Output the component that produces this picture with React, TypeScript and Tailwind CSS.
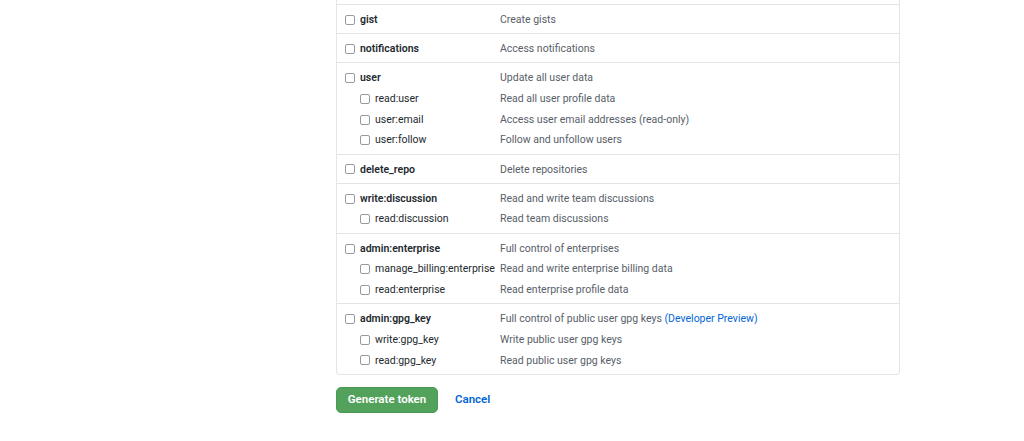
import React from "react";

type Item = { name: string; desc: React.ReactNode };
type Group = { top: Item; subs?: Item[] };

const groups: Group[] = [
  { top: { name: "gist", desc: "Create gists" } },
  { top: { name: "notifications", desc: "Access notifications" } },
  {
    top: { name: "user", desc: "Update all user data" },
    subs: [
      { name: "read:user", desc: "Read all user profile data" },
      { name: "user:email", desc: "Access user email addresses (read-only)" },
      { name: "user:follow", desc: "Follow and unfollow users" },
    ],
  },
  { top: { name: "delete_repo", desc: "Delete repositories" } },
  {
    top: { name: "write:discussion", desc: "Read and write team discussions" },
    subs: [{ name: "read:discussion", desc: "Read team discussions" }],
  },
  {
    top: { name: "admin:enterprise", desc: "Full control of enterprises" },
    subs: [
      { name: "manage_billing:enterprise", desc: "Read and write enterprise billing data" },
      { name: "read:enterprise", desc: "Read enterprise profile data" },
    ],
  },
  {
    top: {
      name: "admin:gpg_key",
      desc: (
        <>
          Full control of public user gpg keys{" "}
          <span className="text-[#0366d6]">(Developer Preview)</span>
        </>
      ),
    },
    subs: [
      { name: "write:gpg_key", desc: "Write public user gpg keys" },
      { name: "read:gpg_key", desc: "Read public user gpg keys" },
    ],
  },
];

function Box() {
  return (
    <span className="inline-block w-[10px] h-[10px] rounded-[2px] border border-[#959ba2] bg-white shrink-0" />
  );
}

function Row({ item, sub }: { item: Item; sub?: boolean }) {
  return (
    <div className="flex items-center h-[20.7px]">
      <div className="w-[155px] flex items-center shrink-0">
        {sub && <span className="w-[15px] shrink-0" />}
        <Box />
        <span
          className={
            "ml-[5px] whitespace-nowrap text-[#24292e] " + (sub ? "font-normal" : "font-semibold")
          }
        >
          {item.name}
        </span>
      </div>
      <div className="text-[#586069] whitespace-nowrap">{item.desc}</div>
    </div>
  );
}

export default function App() {
  return (
    <div
      className="bg-white w-[1024px] h-[441px] overflow-hidden text-[10.5px]"
      style={{ fontFamily: "Roboto, 'Liberation Sans', Arial, sans-serif" }}
    >
      <div className="ml-[336px] w-[564px]">
        <div className="border-l border-r border-b border-[#e1e4e8] rounded-b-[4px]">
          <div className="h-[4px]" />
          {groups.map((g, i) => (
            <div key={i} className="border-t border-[#e1e4e8] pl-[8px] pt-[4.5px] pb-[3px]">
              <Row item={g.top} />
              {g.subs?.map((s) => (
                <Row key={s.name} item={s} sub />
              ))}
            </div>
          ))}
        </div>
        <div className="flex items-center mt-[12px]">
          <button className="h-[26px] w-[102px] rounded-[5px] bg-[#53a25c] text-white font-semibold text-[11.5px] border border-[#4a9a53]">
            Generate token
          </button>
          <span className="ml-[17px] text-[#0366d6] font-semibold text-[11.5px]">Cancel</span>
        </div>
      </div>
    </div>
  );
}
